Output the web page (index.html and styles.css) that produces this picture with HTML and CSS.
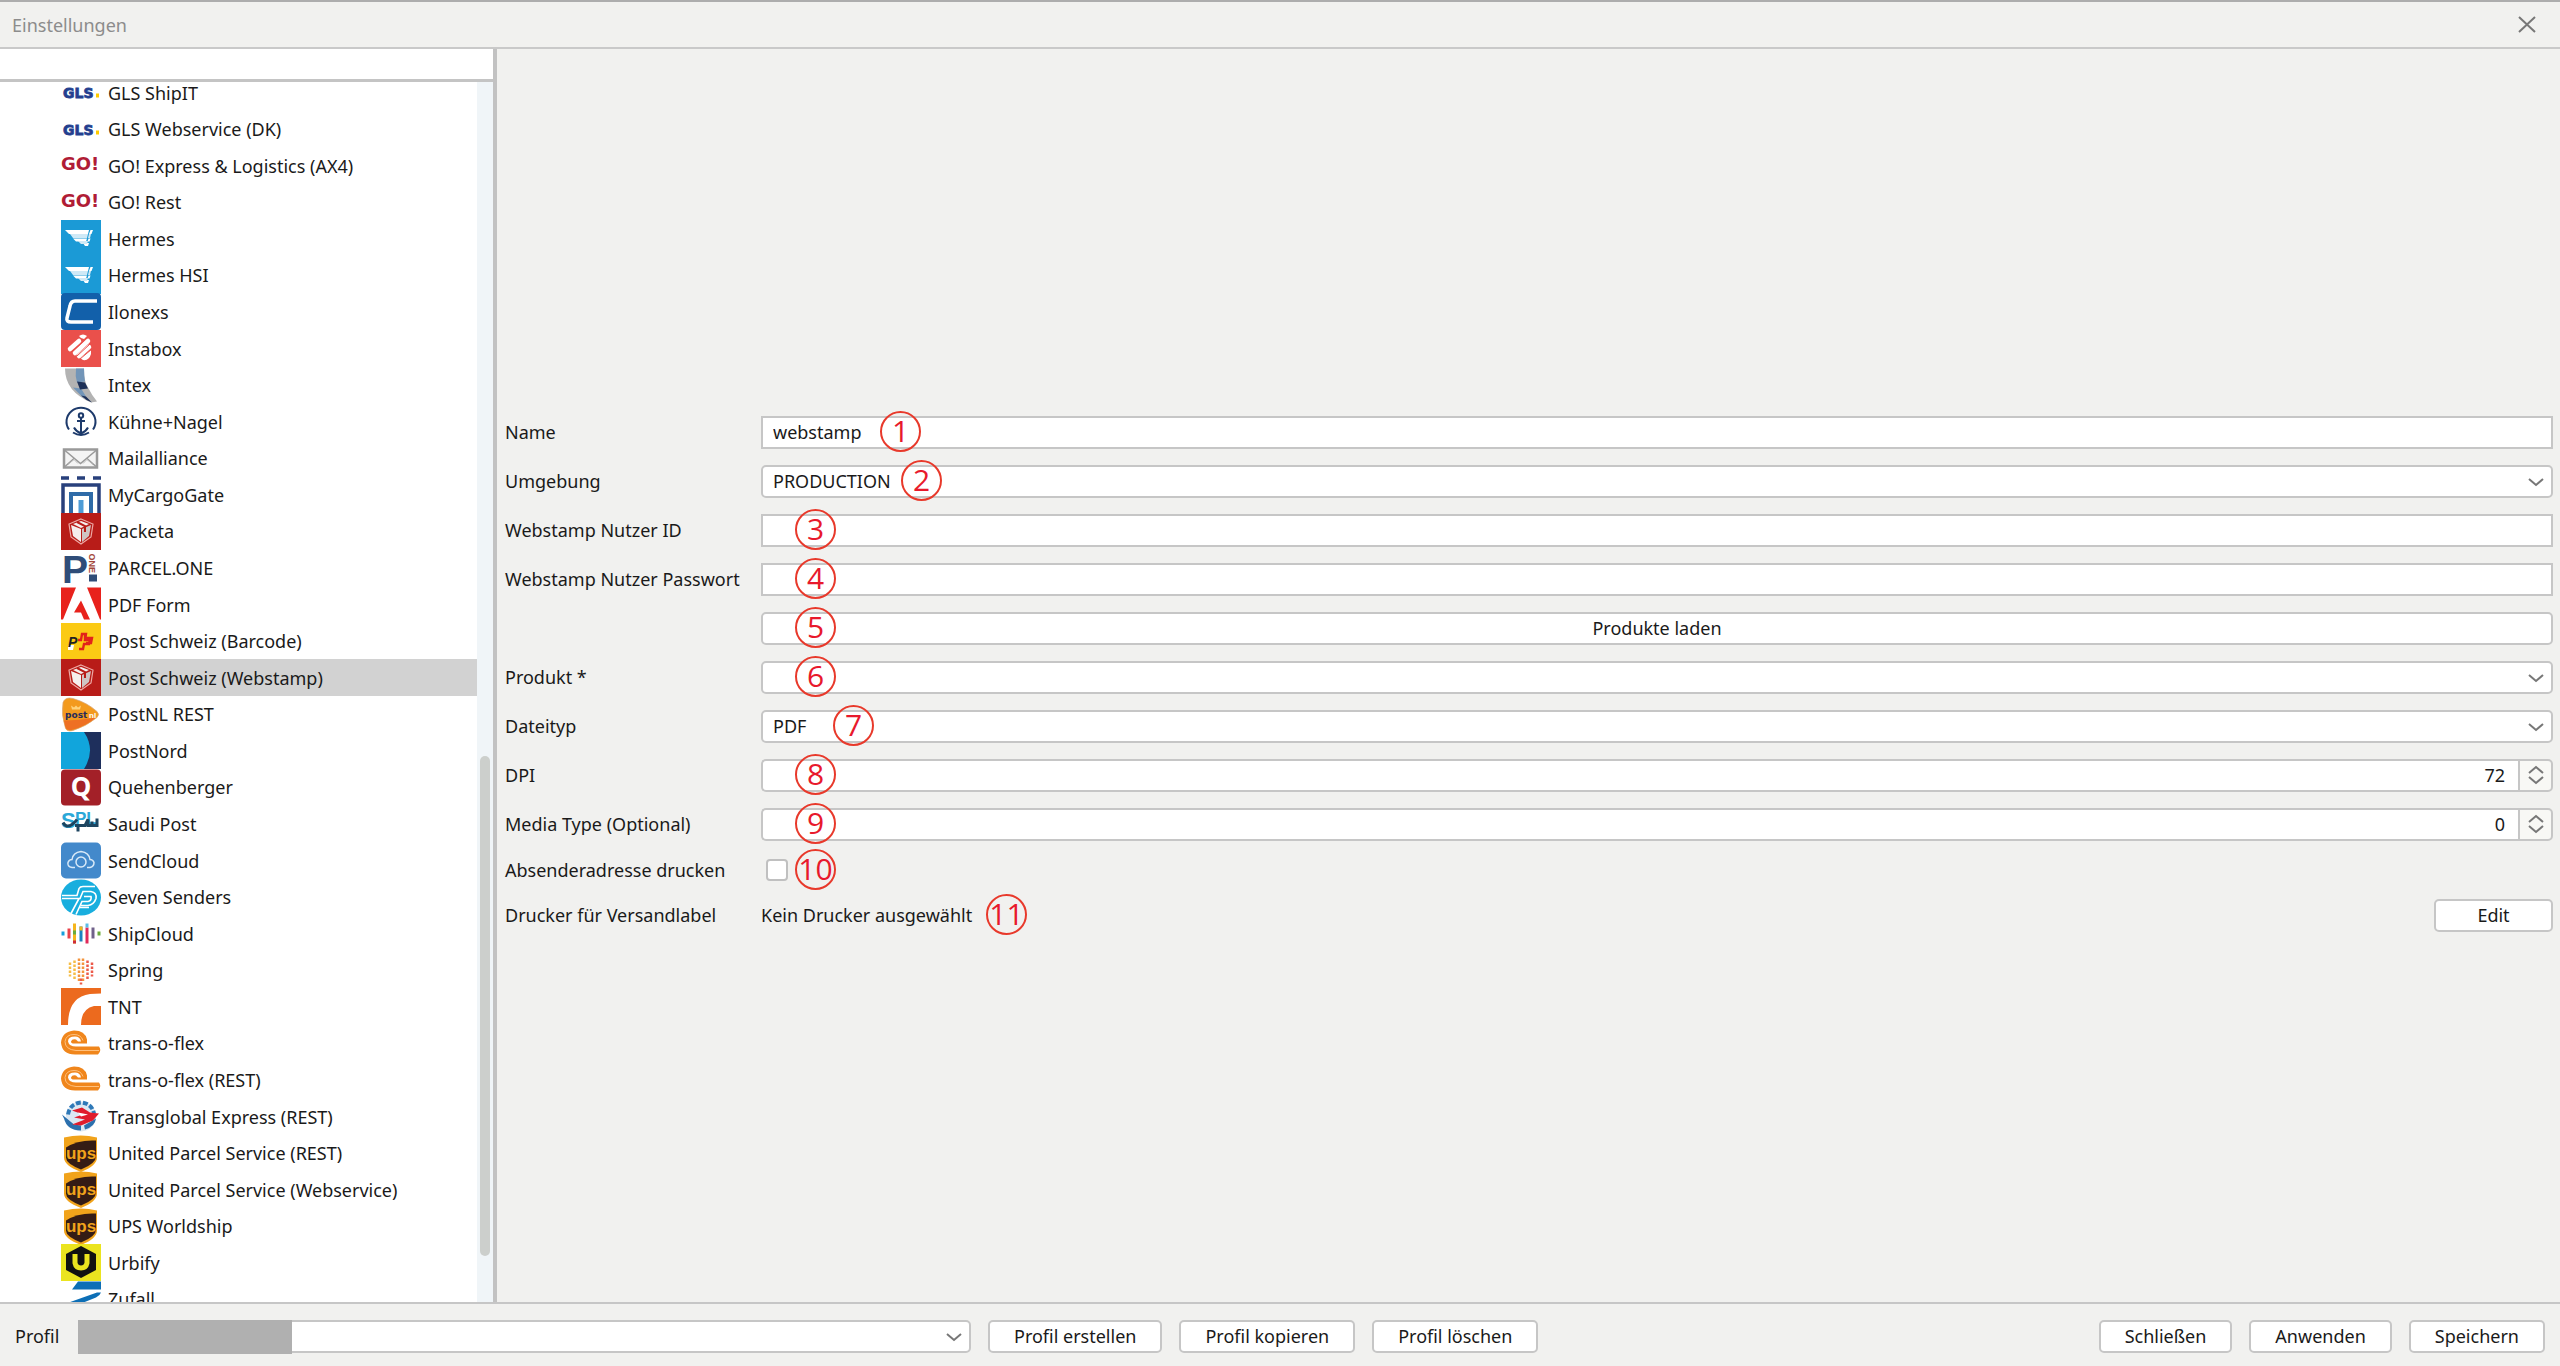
FILE: index.html
```html
<!DOCTYPE html>
<html lang="de">
<head>
<meta charset="utf-8">
<title>Einstellungen</title>
<link rel="stylesheet" href="styles.css">
</head>
<body>
<svg class="sprites" aria-hidden="true">
  <symbol id="i-gls" viewBox="0 0 40 36"><text x="2" y="23" font-family="DejaVu Sans" font-weight="700" font-size="14" fill="#233f8f" stroke="#233f8f" stroke-width=".8">GLS</text><path fill="#fc0" d="M35 19h3v4h-3z"/></symbol>
  <symbol id="i-go" viewBox="0 0 40 36"><text x="0" y="22" font-family="DejaVu Sans" font-weight="700" font-size="18" fill="#b01c36">GO!</text></symbol>
  <symbol id="i-hermes" viewBox="0 0 40 37"><path fill="#1b9ad6" d="M0 0h40v37H0z"/><path fill="#fff" d="M4 10h24l-1 4H8zM29.500 10H32l-1.500 4H28zM12 18.500h14l-1 3H15zM27.500 18.500h2l-1 3h-2zM22 23h6l-1 3h-3z"/><path fill="#cfe9f6" d="M9 14h18l-1 4H12zM28 14h2l-1 4h-2zM17 21h10l-1 3h-6z"/></symbol>
  <symbol id="i-ilonexs" viewBox="0 0 40 37"><rect width="40" height="37" rx="4" fill="#1260aa"/><path d="M36 8H14q-4 0-5 5L6 25q-1 4 4 4h22" fill="none" stroke="#fff" stroke-width="3.500"/></symbol>
  <symbol id="i-instabox" viewBox="0 0 40 37"><path fill="#ea504b" d="M0 0h40v37H0z"/><path d="m9 19 9-8M14 23 27 11M18 26l10-9" stroke="#fff" stroke-width="4.500" stroke-linecap="round" fill="none"/><path fill="#fff" d="M18 6q4-3 8 0l-3 3q-3 0-5-3zM19 28l11-8v4q-2 7-8 6z"/><path d="m11 22 14-13M16 26 29 14M19 29l12-10" stroke="#ea504b" fill="none"/></symbol>
  <symbol id="i-intex" viewBox="0 0 40 36"><path fill="#b3b3b3" d="M4 1h19q0 14 4 19 4 8 9 14l-6 1Q4 24 4 1z"/><path fill="#7295b8" d="M15 1h8q0 8 1 13l-8 1q-2-7-1-14zM12 20l8 1 5 8-3 1z"/><path fill="#1c2f57" d="m16 14 8 1 3 6-8 1zM20 28l5 1 6 6q-6-2-11-7z"/></symbol>
  <symbol id="i-kuehne" viewBox="0 0 40 36"><g fill="none" stroke="#1d3a6b" stroke-width="2"><path d="M8 26a14.500 14 0 1 1 24 0M12 29q8 5 16 0"/><circle cx="20" cy="12" r="2.200"/><path d="M20 14.500V31M16 17.500h8M13 24q2 4 7 6 5-2 7-6"/></g></symbol>
  <symbol id="i-mail" viewBox="0 0 40 36"><path fill="#f4f4f4" stroke="#999" stroke-width="2.500" d="M3 9h33v18H3z"/><path fill="none" stroke="#999" stroke-width="1.500" d="m4 10 15.500 13L35 10M4 26l9-8M35 26l-9-8"/><path fill="none" stroke="#bbb" d="m7 24 6-5 4 4M32 24l-6-5-4 4"/></symbol>
  <symbol id="i-cargo" viewBox="0 0 40 37"><g fill="none"><path stroke="#28407c" stroke-width="3.500" d="M0 2h8M16 2h8M32 2h8"/><path stroke="#28407c" stroke-width="3.500" d="M2 37V9h36v28"/><path stroke="#2f6ba8" stroke-width="4" d="M10 37V18h20v19"/><path stroke="#4e9cd6" stroke-width="5" d="M20 37V24"/></g></symbol>
  <symbol id="i-packeta" viewBox="0 0 40 37"><path fill="#b81c18" d="M0 0h40v37H0z"/><path fill="#b81c18" stroke="#eea9a5" stroke-width="1.200" d="m20 6 12 5-2 13-10 7-10-7L8 11z"/><path fill="#f5efee" d="m10 12 10 4v13l-8-6zM12 11l8-3 8 3-8 4z"/><path fill="#cfc5c4" d="m21 16 9-4-2 11-7 6z"/><path stroke="#b81c18" stroke-width="2" fill="none" d="m16 9 8 4v6"/></symbol>
  <symbol id="i-parcel" viewBox="0 0 40 36"><text x="1" y="33" font-family="Liberation Sans" font-weight="700" font-size="39" fill="#2f4d78">P</text><text transform="translate(28 4) rotate(90)" font-family="Liberation Sans" font-weight="700" font-size="9" fill="#a3483c">ONE</text><path fill="#2f4d78" d="M28 25h8v7h-8z"/></symbol>
  <symbol id="i-pdf" viewBox="0 0 40 36"><path fill="#e8221c" d="M0 1h15L2 33H0zM26 1h14v32h-1zM20 14l9 19h-6l-3-7h-7z"/></symbol>
  <symbol id="i-postch" viewBox="0 0 40 37"><path fill="#fbca14" d="M0 0h40v37H0z"/><path fill="#fff" d="M7 22h6l-1 5H7z"/><text x="7" y="24" font-family="Liberation Sans" font-weight="700" font-style="italic" font-size="14" fill="#222">P</text><path fill="none" stroke="#e2231a" stroke-width="2.400" d="M18 26h4l1-5h5l1-4h-5l1-6h-4l-1 6h-3"/><path fill="none" stroke="#e2231a" stroke-width="2.400" d="M24 12v3h7l-1 5h-5"/></symbol>
  <symbol id="i-postnl" viewBox="0 0 40 36"><path fill="#f39a1e" stroke="#d9a77c" stroke-width=".7" d="M2 6q2-6 10-4 14 4 24 13 3 3 0 6-11 9-24 13-7 2-8-4Q0 18 2 6z"/><path fill="#ee7023" d="M3 24q14 0 32-3-11 9-23 12-7 2-8-4z"/><text x="4" y="21" font-family="DejaVu Sans" font-weight="700" font-size="9" fill="#262a5c">post</text><text x="28" y="21" font-family="Liberation Sans" font-weight="700" font-size="8" fill="#fff">nl</text><path d="m10 9 3 2 2-2 2 2 3-2-1 4h-8z" fill="#ffd27a"/></symbol>
  <symbol id="i-postnord" viewBox="0 0 40 37"><path fill="#1e2f5c" d="M0 0h40v37H0z"/><path fill="#11a5dc" d="M0 0h23q12 18 0 37H0z"/></symbol>
  <symbol id="i-quehen" viewBox="0 0 40 36"><rect width="40" height="36" rx="4" fill="#a32028"/><text x="20" y="26" text-anchor="middle" font-family="Noto Sans" font-weight="700" font-size="26" fill="#fff">Q</text></symbol>
  <symbol id="i-saudi" viewBox="0 0 40 36"><text x="0" y="22" font-family="Liberation Sans" font-weight="700" font-size="22" fill="#2ba8d8">S</text><text x="14" y="18" font-family="Liberation Sans" font-weight="700" font-size="17" fill="#2ba8d8">PL</text><path fill="none" stroke="#1d4560" stroke-width="3" d="M2 17q3 6 9 2 3-2 5-5M14 20h10l3-6v6h4v-4 4h5v-7M17 20v6"/></symbol>
  <symbol id="i-sendcloud" viewBox="0 0 40 36"><rect width="40" height="36" rx="5" fill="#4389cb"/><g fill="none" stroke="#d8e9f8" stroke-width="1.500"><path d="M14 25h-3q-5-1-4-5 1-3 4-3 1-7 9-8 8 1 9 8 3 0 4 3 0 4-4 5h-3"/><circle cx="20" cy="19.500" r="5"/></g></symbol>
  <symbol id="i-seven" viewBox="0 0 40 36"><ellipse cx="20" cy="18" rx="20" ry="18" fill="#18aede"/><g fill="none" stroke="#fff" stroke-width="1.600"><path d="M1 16h15l2-7q1-2 4-2h12M1 19h18l3-7h8q6 1 5 7-2 6-8 7h-7M10 34l8-15M15 35l6-13h6q4-1 3-5h-7M19 28h9"/></g></symbol>
  <symbol id="i-shipcloud" viewBox="0 0 40 36"><g stroke-width="3"><path stroke="#16a0dc" d="M2 16v4"/><path stroke="#e8424a" d="M8 13v10"/><path stroke="#f5b51c" d="M13.500 8v20"/><path stroke="#6bab3c" d="M13.500 15v4M38 16v4"/><path stroke="#1c82c0" d="M20 11v15"/><path stroke="#f5b51c" d="M20 11v4"/><path stroke="#e02a5a" d="M26 12v16"/><path stroke="#5cbce6" d="M26 8v4"/><path stroke="#70618a" d="M32 12v11"/><path stroke="#cc2c3c" d="M13.500 25v3"/></g></symbol>
  <symbol id="i-spring" viewBox="0 0 40 36"><g fill="none" stroke-width="2.500" stroke-dasharray="2.500 1.500"><path stroke="#f6bd45" d="M9 10v14M13.500 8v19"/><path stroke="#f4943c" d="M18 6v23M22 6v23"/><path stroke="#ec5a4a" d="M26.500 8v19M31 10v14M20 26v6"/></g></symbol>
  <symbol id="i-tnt" viewBox="0 0 40 37"><path fill="#ec6a1e" d="M0 0h40v37H0z"/><path fill="#fff" d="M7 37Q7 9 29 6l11-.500V18H33Q20 21 20 37z"/></symbol>
  <symbol id="i-tof" viewBox="0 0 40 36"><path fill="#f0861c" d="M13 5q11 0 13 9v4H13q-3 0-3-2 1-3 5-2l2 2h3q-1-5-6-5-7 0-7 5 1 5 8 5h23q3 4-1 8H14Q1 29 0 17 1 6 13 5z"/><path fill="none" stroke="#ffc07c" d="M38 25H15Q4 24 4 16q1-7 9-7 7 0 9 6"/></symbol>
  <symbol id="i-tge" viewBox="0 0 40 36"><circle cx="20" cy="18" r="15" fill="#dce8f3"/><path fill="none" stroke="#2f79b8" stroke-width="4" stroke-dasharray="5 2" d="M7 16q2-11 13-12 11 1 13 11"/><path fill="#2b70ae" d="m1 16 12 10 7 1v5Q6 32 3 20zM24 31q10-3 11-11l-12 7z"/><path fill="#e01c2c" d="m11 12 10-3 8 5 9 1-6 7-12 5-9-1 13-5-11-2 9-3z"/><path fill="#fff" d="m17 14 10 2-7 2z"/></symbol>
  <symbol id="i-ups" viewBox="0 0 40 36"><path fill="#f1a31b" d="M3 2q17-4 33 0v20q0 8-16 14.500Q3 30 3 22z"/><path fill="#351c15" d="M5 12q12-8 30-7v16q0 7-15 13Q5 28 5 22z"/><text x="20" y="23" text-anchor="middle" font-family="Liberation Sans" font-weight="700" font-size="17" fill="#f1a31b">ups</text></symbol>
  <symbol id="i-urbify" viewBox="0 0 40 37"><path fill="#ebe41f" d="M0 0h40v37H0z"/><path fill="#111" d="m20 2 15 8v16l-15 8-15-8V10z"/><path fill="none" stroke="#ebe41f" stroke-width="5" d="M14 10v9q1 5 6 5t6-5v-9"/></symbol>
  <symbol id="i-zufall" viewBox="0 0 40 36"><path fill="#0d6fb6" d="M17 0h23v8H11zM36 11h4q-1 3-5 5L20 22H5z"/></symbol>
  <symbol id="i-down" viewBox="0 0 16 9"><path d="m1 1 7 6 7-6" fill="none" stroke="#777" stroke-width="2"/></symbol>
  <symbol id="i-updown" viewBox="0 0 16 20"><path d="m1 8 7-6 7 6M1 12l7 6 7-6" fill="none" stroke="#777" stroke-width="2"/></symbol>
</svg>

<header class="titlebar">
  <h1>Einstellungen</h1>
  <button class="close" type="button" aria-label="Fenster schließen"><svg viewBox="0 0 18 17"><path d="m1 1 16 15M17 1 1 16" stroke="#777" stroke-width="2"/></svg></button>
</header>

<main>
  <aside class="sidebar">
    <input class="search" type="text" aria-label="Suche">
    <div class="tree">
      <ul class="carriers">
        <li><svg><use href="#i-gls"/></svg>GLS ShipIT</li>
        <li><svg><use href="#i-gls"/></svg>GLS Webservice (DK)</li>
        <li><svg><use href="#i-go"/></svg>GO! Express &amp; Logistics (AX4)</li>
        <li><svg><use href="#i-go"/></svg>GO! Rest</li>
        <li><svg><use href="#i-hermes"/></svg>Hermes</li>
        <li><svg><use href="#i-hermes"/></svg>Hermes HSI</li>
        <li><svg><use href="#i-ilonexs"/></svg>Ilonexs</li>
        <li><svg><use href="#i-instabox"/></svg>Instabox</li>
        <li><svg><use href="#i-intex"/></svg>Intex</li>
        <li><svg><use href="#i-kuehne"/></svg>Kühne+Nagel</li>
        <li><svg><use href="#i-mail"/></svg>Mailalliance</li>
        <li><svg><use href="#i-cargo"/></svg>MyCargoGate</li>
        <li><svg><use href="#i-packeta"/></svg>Packeta</li>
        <li><svg><use href="#i-parcel"/></svg>PARCEL.ONE</li>
        <li><svg><use href="#i-pdf"/></svg>PDF Form</li>
        <li><svg><use href="#i-postch"/></svg>Post Schweiz (Barcode)</li>
        <li class="selected"><svg><use href="#i-packeta"/></svg>Post Schweiz (Webstamp)</li>
        <li><svg><use href="#i-postnl"/></svg>PostNL REST</li>
        <li><svg><use href="#i-postnord"/></svg>PostNord</li>
        <li><svg><use href="#i-quehen"/></svg>Quehenberger</li>
        <li><svg><use href="#i-saudi"/></svg>Saudi Post</li>
        <li><svg><use href="#i-sendcloud"/></svg>SendCloud</li>
        <li><svg><use href="#i-seven"/></svg>Seven Senders</li>
        <li><svg><use href="#i-shipcloud"/></svg>ShipCloud</li>
        <li><svg><use href="#i-spring"/></svg>Spring</li>
        <li><svg><use href="#i-tnt"/></svg>TNT</li>
        <li><svg><use href="#i-tof"/></svg>trans-o-flex</li>
        <li><svg><use href="#i-tof"/></svg>trans-o-flex (REST)</li>
        <li><svg><use href="#i-tge"/></svg>Transglobal Express (REST)</li>
        <li><svg><use href="#i-ups"/></svg>United Parcel Service (REST)</li>
        <li><svg><use href="#i-ups"/></svg>United Parcel Service (Webservice)</li>
        <li><svg><use href="#i-ups"/></svg>UPS Worldship</li>
        <li><svg><use href="#i-urbify"/></svg>Urbify</li>
        <li><svg><use href="#i-zufall"/></svg>Zufall</li>
      </ul>
      <div class="scrollbar"><div class="thumb"></div></div>
    </div>
  </aside>

  <form class="settings">
    <div class="row"><label for="name">Name</label><div class="control"><input id="name" class="field" type="text" value="webstamp"><span class="badge after-name">1</span></div></div>
    <div class="row"><label for="env">Umgebung</label><div class="control"><select id="env" class="field round"><option>PRODUCTION</option></select><svg class="arrow"><use href="#i-down"/></svg><span class="badge after-env">2</span></div></div>
    <div class="row"><label for="uid">Webstamp Nutzer ID</label><div class="control"><input id="uid" class="field" type="text"><span class="badge">3</span></div></div>
    <div class="row"><label for="pw">Webstamp Nutzer Passwort</label><div class="control"><input id="pw" class="field" type="password"><span class="badge">4</span></div></div>
    <div class="row"><span></span><div class="control"><button class="btn wide" type="button">Produkte laden</button><span class="badge">5</span></div></div>
    <div class="row"><label for="product">Produkt *</label><div class="control"><select id="product" class="field round"><option></option></select><svg class="arrow"><use href="#i-down"/></svg><span class="badge">6</span></div></div>
    <div class="row"><label for="filetype">Dateityp</label><div class="control"><select id="filetype" class="field round"><option>PDF</option></select><svg class="arrow"><use href="#i-down"/></svg><span class="badge after-type">7</span></div></div>
    <div class="row"><label for="dpi">DPI</label><div class="control spin"><input id="dpi" class="field" type="text" inputmode="numeric" value="72"><button type="button" aria-label="DPI ändern"><svg><use href="#i-updown"/></svg></button><span class="badge">8</span></div></div>
    <div class="row"><label for="media">Media Type (Optional)</label><div class="control spin"><input id="media" class="field" type="text" inputmode="numeric" value="0"><button type="button" aria-label="Media Type ändern"><svg><use href="#i-updown"/></svg></button><span class="badge">9</span></div></div>
    <div class="row check"><label for="sender">Absenderadresse drucken</label><div class="control"><input id="sender" type="checkbox"><span class="badge">10</span></div></div>
    <div class="row"><span>Drucker für Versandlabel</span><div class="control printer"><span>Kein Drucker ausgewählt</span><button class="btn edit" type="button">Edit</button><span class="badge after-printer">11</span></div></div>
  </form>
</main>

<footer class="actions">
  <label for="profile">Profil</label>
  <div class="control profile"><select id="profile" class="field round"><option></option></select><span class="redacted"></span><svg class="arrow"><use href="#i-down"/></svg></div>
  <button class="btn" type="button">Profil erstellen</button>
  <button class="btn" type="button">Profil kopieren</button>
  <button class="btn" type="button">Profil löschen</button>
  <button class="btn push" type="button">Schließen</button>
  <button class="btn" type="button">Anwenden</button>
  <button class="btn" type="button">Speichern</button>
</footer>
</body>
</html>
```
FILE: styles.css
```css
* { box-sizing: border-box; }

body {
  margin: 0;
  height: 100vh;
  display: flex;
  flex-direction: column;
  overflow: hidden;
  background: #f1f1ef;
  color: #1a1a1a;
  font: 18px/24px "Noto Sans", "Open Sans", sans-serif;
}

input, select, button {
  font: inherit;
  color: inherit;
  margin: 0;
}

.sprites { display: none; }

/* Title bar */
.titlebar {
  flex: none;
  height: 49px;
  display: flex;
  align-items: center;
  justify-content: space-between;
  padding: 0 24px 0 12px;
  border-top: 2px solid #adadad;
  border-bottom: 2px solid #c9c9c9;
}
.titlebar h1 { margin: 0; font-size: 18px; font-weight: 400; color: #8c8c8c; }
.close { display: flex; padding: 0; border: 0; background: none; }
.close svg { width: 18px; height: 17px; }

main { flex: 1; min-height: 0; display: flex; }

/* Carrier list */
.sidebar {
  flex: none;
  width: 497px;
  display: flex;
  flex-direction: column;
  background: #fff;
  border-right: 4px solid #c2c2c2;
}
.search {
  flex: none;
  height: 33px;
  border: 0;
  border-bottom: 3px solid #c4c4c4;
  padding: 0 12px;
  background: #fff;
  outline: 0;
}
.tree { flex: 1; min-height: 0; display: flex; overflow: hidden; }
.carriers { flex: 1; margin: -8px 0 0; padding: 0; list-style: none; }
.carriers li {
  display: flex;
  align-items: center;
  gap: 7px;
  height: 37px;
  padding-left: 61px;
  white-space: nowrap;
}
.carriers li:nth-child(7n+2),
.carriers li:nth-child(7n+4),
.carriers li:nth-child(7n+6) { height: 36px; }
.carriers svg { width: 40px; height: 37px; flex: none; }
.carriers .selected { background: #d2d2d2; }
.scrollbar { flex: none; width: 16px; display: flex; flex-direction: column; align-items: center; background: #f0f5f8; }
.scrollbar::before { content: ""; flex: 674; }
.scrollbar::after { content: ""; flex: 46; }
.thumb { flex: 500; width: 10px; border-radius: 5px; background: #cccfcc; }

/* Settings form */
.settings {
  flex: 1;
  min-width: 0;
  display: flex;
  flex-direction: column;
  justify-content: center;
  gap: 16px;
  padding: 0 7px 4px 8px;
}
.row {
  display: grid;
  grid-template-columns: 240px 1fr;
  gap: 16px;
  align-items: center;
  height: 33px;
}
.row.check { height: 26px; }
.row label, .row > span { white-space: nowrap; }
.control { position: relative; display: flex; align-items: center; }

.field {
  flex: 1;
  width: 100%;
  min-width: 0;
  height: 33px;
  padding: 0 10px;
  border: 2px solid #c6c6c6;
  background: #fff;
  outline: 0;
}
select.field { appearance: none; }
.round { border-radius: 5px; }
.arrow { position: absolute; right: 9px; top: 13px; width: 16px; height: 9px; pointer-events: none; }

.spin .field { border-right: 0; border-radius: 5px 0 0 5px; text-align: right; padding-right: 13px; }
.spin button {
  flex: none;
  display: flex;
  align-items: center;
  justify-content: center;
  width: 35px;
  height: 33px;
  padding: 0;
  border: 2px solid #c6c6c6;
  border-radius: 0 5px 5px 0;
  background: #f8f8f5;
}
.spin button svg { width: 16px; height: 20px; }

input[type="checkbox"] {
  appearance: none;
  width: 22px;
  height: 22px;
  margin-left: 5px;
  border: 2px solid #c0c0c0;
  border-radius: 4px;
  background: #fff;
}

.btn {
  height: 33px;
  padding: 0 24px;
  border: 2px solid #c6c6c6;
  border-radius: 5px;
  background: #fff;
  white-space: nowrap;
}
.wide { flex: 1; }
.printer { justify-content: space-between; }
.edit { width: 119px; }

/* Numbered callouts lying over the controls */
.badge {
  position: absolute;
  left: 34px;
  top: 50%;
  width: 41px;
  height: 41px;
  margin-top: -21px;
  border: 2px solid #e8392b;
  border-radius: 50%;
  color: #e8192c;
  font: 30px/36px "Open Sans", sans-serif;
  pointer-events: none;
  display: flex;
  justify-content: center;
}
.after-name { left: 119px; }
.after-env { left: 140px; }
.after-type { left: 72px; }
.after-printer { left: 225px; }

/* Bottom bar */
.actions {
  flex: none;
  display: flex;
  align-items: center;
  gap: 17px;
  height: 64px;
  padding: 2px 15px 0 15px;
  border-top: 2px solid #c6c6c6;
}
.actions label { min-width: 46px; }
.profile { width: 893px; }
.redacted { position: absolute; left: 0; top: 0; width: 214px; height: 34px; background: #b0b0b0; }
.push { margin-left: auto; }
```
